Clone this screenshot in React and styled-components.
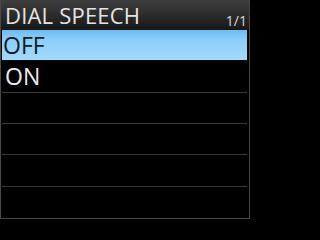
import React from 'react'
import styled, {createGlobalStyle} from 'styled-components'

const Global = createGlobalStyle`
    html, body {
        margin: 0;
        padding: 0;
        background: #000;
    }
`

const items = ['OFF', 'ON', '', '', '', '']

export default function App() {
    const selected = 0
    return (
        <>
            <Global/>
            <Screen>
                <Header>
                    <Title>DIAL SPEECH</Title>
                    <Page>1/1</Page>
                </Header>
                <List>
                    {items.map((label, i) => (
                        <Row key={i} selected={i === selected}>{label}</Row>
                    ))}
                </List>
            </Screen>
        </>
    )
}

const Screen = styled.div`
    width: 250px;
    height: 219px;
    box-sizing: border-box;
    display: flex;
    flex-direction: column;
    background: #000;
    border: 1px solid #4a4a4a;
    border-top: none;
    font-family: "Open Sans", "DejaVu Sans", sans-serif;
    overflow: hidden;
`
const Header = styled.div`
    height: 30px;
    flex-shrink: 0;
    display: flex;
    justify-content: space-between;
    align-items: flex-end;
    padding: 0 2px 0 4px;
    background: linear-gradient(to bottom, #3e3e3e 0%, #2a2a2a 55%, #161616 100%);
    color: #e4e4e4;
`
const Title = styled.div`
    font-size: 22px;
    line-height: 30px;
    height: 30px;
    margin-top: -3px;
    letter-spacing: 0.2px;
`
const Page = styled.div`
    font-size: 14px;
    line-height: 14px;
    margin-bottom: 2px;
    color: #d8d8d8;
`
const List = styled.div`
    flex: 1;
    min-height: 0;
    display: grid;
    grid-template-rows: repeat(6, minmax(0, 1fr));
    padding: 0 2px 0 1px;
`
const Row = styled.div`
    display: flex;
    align-items: center;
    min-height: 0;
    padding-left: ${props => props.selected ? '1px' : '3px'};
    font-size: 23px;
    line-height: 1;
    box-sizing: border-box;
    border-bottom: 1px solid ${props => props.selected ? '#0a0a0a' : '#3a3a3a'};
    color: ${props => props.selected ? '#0a1a28' : '#ececec'};
    background: ${props => props.selected
        ? 'linear-gradient(to bottom, #6fbaf0 0%, #8ccdf8 30%, #a2d9fc 100%)'
        : '#000'};
    &:last-child {
        border-bottom: none;
    }
`
